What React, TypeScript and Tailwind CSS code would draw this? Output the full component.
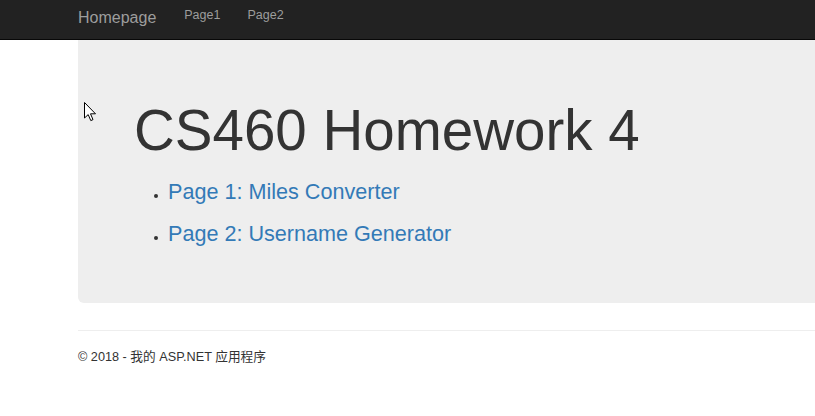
import React from "react";

export default function App() {
  return (
    <div className="relative min-h-[416px] bg-white text-[#333]" style={{ fontFamily: '"Liberation Sans", Arial, "Noto Sans CJK SC", sans-serif' }}>
      <nav className="h-[40px] bg-[#222] border-b border-[#080808] flex items-center pl-[78px]">
        <a className="text-[16px] text-[#9d9d9d] leading-none mt-[-4px]">Homepage</a>
        <a className="ml-[28px] text-[12.5px] text-[#9d9d9d] leading-none mt-[-8px]">Page1</a>
        <a className="ml-[27px] text-[12.5px] text-[#9d9d9d] leading-none mt-[-8px]">Page2</a>
      </nav>
      <div className="ml-[78px]">
        <div className="bg-[#eee] rounded-bl-[6px] pl-[56px] pt-[58px] pb-[48px]">
          <h1 className="text-[56.5px] leading-[66px] font-normal text-[#333]">CS460 Homework 4</h1>
          <ul className="mt-[7px] pl-[34px] list-disc">
            <li className="text-[21.6px] leading-[42px] marker:text-[#333] marker:text-[12px]">
              <a className="text-[#337ab7]">Page 1: Miles Converter</a>
            </li>
            <li className="text-[21.6px] leading-[42px] marker:text-[#333] marker:text-[12px]">
              <a className="text-[#337ab7]">Page 2: Username Generator</a>
            </li>
          </ul>
        </div>
        <div className="mt-[27px] border-t border-[#eee] pt-[18px]">
          <p className="text-[12.7px] leading-[16px] text-[#333]">© 2018 - 我的 ASP.NET 应用程序</p>
        </div>
      </div>
      <svg className="absolute left-[84px] top-[102px]" width="13" height="20" viewBox="0 0 13 20">
        <path d="M0.5 0.5 L0.5 16 L4.2 12.6 L6.8 18.6 L9 17.6 L6.5 11.8 L11.5 11.8 Z" fill="#fff" stroke="#000" strokeWidth="1" strokeLinejoin="miter" />
      </svg>
    </div>
  );
}
